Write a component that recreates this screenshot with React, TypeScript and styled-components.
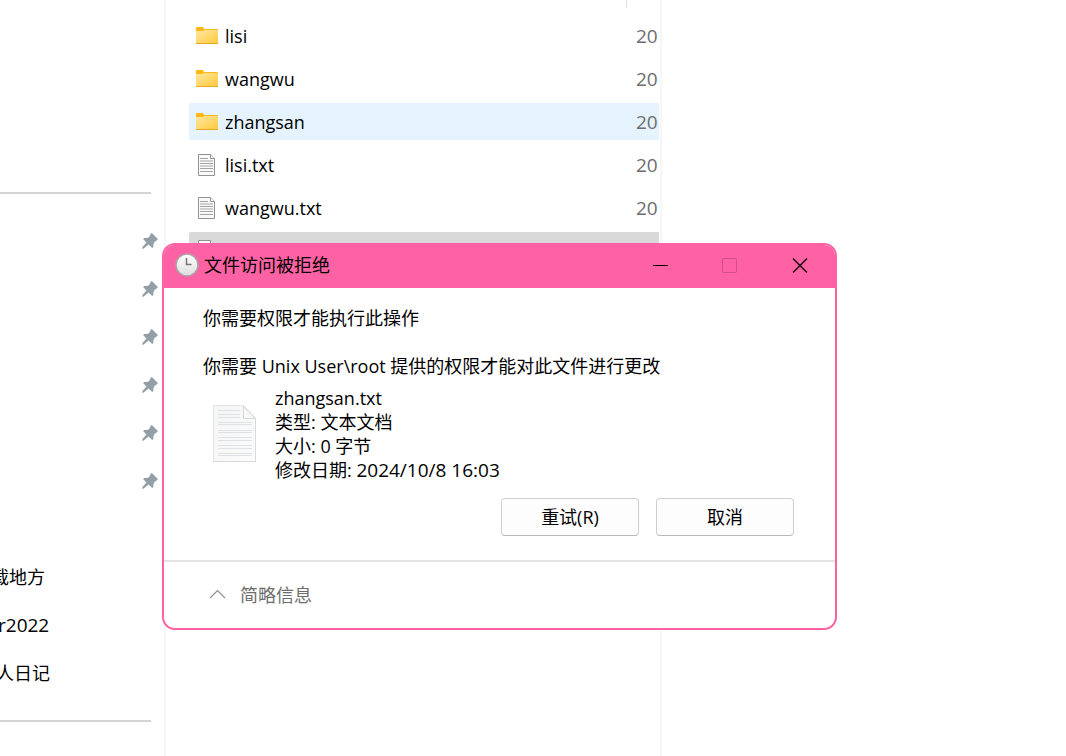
import React from "react";
import styled, { createGlobalStyle } from "styled-components";

const GlobalStyle = createGlobalStyle`
  *, *::before, *::after { box-sizing: border-box; }
  body {
    margin: 0;
    background: #fff;
    color: #000;
    font: 18px/24px "Open Sans", "Noto Sans CJK SC", sans-serif;
    overflow: hidden;
  }
  button { font: inherit; color: inherit; }
  svg { display: block; flex: none; }
`;

const Desktop = styled.div`
  position: relative;
  display: flex;
  min-height: 100vh;
`;

const Sidebar = styled.nav`
  flex: none;
  width: 166px;
  padding-top: 192px;
  border-right: 2px solid #f6f6f6;
`;

const SidebarRule = styled.hr`
  height: 2px;
  margin: 0 13px 0 0;
  border: 0;
  background: #d5d5d5;
`;

const SidebarList = styled.ul`
  margin: 0;
  padding: 23px 0;
  list-style: none;
`;

const SidebarItem = styled.li<{ $cut?: number }>`
  display: flex;
  align-items: center;
  height: 48px;
  padding-right: 6px;
  margin-left: ${(p) => -(p.$cut ?? 0)}px;
  white-space: nowrap;

  svg { margin-left: auto; }
`;

const SidebarLink = styled.a`
  color: inherit;
  text-decoration: none;
`;

const Large = styled.span`
  font-size: 19px;
`;

const FilePane = styled.main`
  flex: none;
  width: 496px;
  padding-left: 23px;
  border-right: 2px solid #f6f6f6;
`;

const ColumnHeader = styled.div`
  height: 8px;
  width: 438px;
  margin-bottom: 9px;
  border-right: 1px solid #e0e0e0;
`;

const FileList = styled.ul`
  display: flex;
  flex-direction: column;
  gap: 6px;
  margin: 0;
  padding: 0 1px 0 0;
  list-style: none;
`;

const FileRow = styled.li<{ $state?: "hover" | "selected" }>`
  display: flex;
  align-items: center;
  gap: 6px;
  height: 37px;
  padding-left: 6px;
  border-radius: 2px 0 0 2px;
  background: ${(p) =>
    p.$state === "hover" ? "#e5f3ff" : p.$state === "selected" ? "#d9d9d9" : "transparent"};
`;

const FileDate = styled.span`
  width: 23px;
  margin-left: auto;
  overflow: hidden;
  font-size: 19px;
  color: #6d6d6d;
`;

const Dialog = styled.section`
  position: absolute;
  left: 162px;
  top: 243px;
  width: 675px;
  overflow: hidden;
  border: 2px solid #ff62a4;
  border-radius: 13px;
  background: #fff;
`;

const TitleBar = styled.header`
  display: flex;
  align-items: center;
  height: 43px;
  padding-left: 11px;
  padding-bottom: 3px;
  background: #ff62a4;
`;

const Title = styled.h1`
  flex: 1;
  margin: 0 0 0 5px;
  font-size: 18px;
  font-weight: 400;
`;

const CaptionButton = styled.button`
  display: grid;
  place-items: center;
  width: 70px;
  height: 40px;
  padding: 0;
  border: 0;
  background: transparent;
`;

const Body = styled.div`
  padding: 18px 41px 24px 39px;
  border-bottom: 2px solid #e3e3e3;
`;

const Message = styled.p`
  margin: 0 0 24px;
  white-space: nowrap;
`;

const FileSummary = styled.div`
  display: flex;
  align-items: center;
  gap: 18px;
  margin-top: -16px;
  padding-left: 9px;
`;

const Details = styled.ul`
  margin: 0;
  padding: 0;
  list-style: none;
`;

const Actions = styled.div`
  display: flex;
  justify-content: flex-end;
  gap: 17px;
  margin-top: 16px;
`;

const ActionButton = styled.button`
  width: 138px;
  height: 38px;
  padding: 0;
  border: 1px solid #d0d0d0;
  border-bottom-color: #b8b8b8;
  border-radius: 4px;
  background: #fdfdfd;
`;

const Footer = styled.footer`
  padding: 21px 44px;
`;

const DetailsToggle = styled.button`
  display: flex;
  align-items: center;
  gap: 13px;
  padding: 0;
  border: 0;
  background: transparent;
  color: #6d6d6d;
`;

const FolderIcon = () => (
  <svg width="24" height="19" viewBox="0 0 24 19" aria-hidden="true">
    <defs>
      <linearGradient id="folder" x1="0" y1="0" x2="1" y2="1">
        <stop offset="0" stopColor="#ffe7a0" />
        <stop offset="1" stopColor="#ffca3e" />
      </linearGradient>
    </defs>
    <path d="M1 2q0-1 1-1h6l1 2h13q1 0 1 1v3H1z" fill="#fbb817" />
    <path d="M1 5h7l1-1h14v12q0 1-1 1H2q-1 0-1-1z" fill="url(#folder)" />
    <path d="M1 17.500h22" stroke="#eba51e" />
  </svg>
);

const TextIcon = () => (
  <svg width="24" height="23" viewBox="0 0 24 23" aria-hidden="true">
    <path d="M3.500 1.500h12l4 4v17h-16z" fill="#fafafa" stroke="#929292" />
    <path d="M15.500 1.500v4h4" fill="#fff" stroke="#929292" />
    <path
      d="M5 5.500h8M5 8h13M5 10.500h13M5 13h13M5 15.500h13M5 18.500h13"
      stroke="#a3a3a3"
      strokeWidth="1.200"
    />
  </svg>
);

const PinIcon = () => (
  <svg width="16" height="16" viewBox="0 0 16 16" aria-hidden="true">
    <path
      d="M8.800.6q.9-.7 1.800.1l4.800 4.900q.7.900-.2 1.700l-2.600 1.400-1.200 2.500-.1 2.800q-.5 1.300-1.600.5L6.600 11.600 1.500 15.800.2 15.600l0-1.300 4.300-4.800L1.700 6.800q-.8-1.100.4-1.700l3.300-.2 2.200-1.400z"
      fill="#939fa7"
    />
  </svg>
);

const ClockIcon = () => (
  <svg width="24" height="24" viewBox="0 0 24 24" aria-hidden="true">
    <defs>
      <linearGradient id="clock" x1="0" y1="0" x2="0" y2="1">
        <stop offset="0" stopColor="#fff" />
        <stop offset="1" stopColor="#dedede" />
      </linearGradient>
    </defs>
    <circle cx="12" cy="12" r="11" fill="url(#clock)" stroke="#a9a0a5" strokeWidth="1.500" />
    <path d="M11.500 5v6.500h5" fill="none" stroke="#777" strokeWidth="1.500" />
  </svg>
);

const DocumentIcon = () => (
  <svg width="45" height="58" viewBox="0 0 45 58" aria-hidden="true">
    <defs>
      <linearGradient id="page" x1="0" y1="0" x2="1" y2="1">
        <stop offset="0" stopColor="#f3f4f5" />
        <stop offset="1" stopColor="#fcfcfc" />
      </linearGradient>
      <linearGradient id="fold" x1="0" y1="1" x2="1" y2="0">
        <stop offset="0.300" stopColor="#fafafa" />
        <stop offset="1" stopColor="#d3d5d7" />
      </linearGradient>
    </defs>
    <path d="M1.500.5h30l12 13v43h-42z" fill="url(#page)" stroke="#e2e4e5" />
    <path d="M1 56.500h43M43.500 13v44" stroke="#d8dadb" />
    <path d="M31.500.5v13h12z" fill="url(#fold)" stroke="#d6d8da" />
    <path
      d="M6 5.500h22M6 9.500h22M6 12.500h22M6 17.500h34M6 19.500h34M6 25.500h34M6 27.500h34M6 32.500h34M6 35.500h34M6 40.500h34M6 43.500h34M6 48.500h34M6 50.500h34"
      stroke="#dfe1e4"
    />
  </svg>
);

const MinimizeIcon = () => (
  <svg width="16" height="16" viewBox="0 0 16 16" aria-hidden="true">
    <path d="M1 8.500h15" stroke="#000" />
  </svg>
);

const MaximizeIcon = () => (
  <svg width="16" height="16" viewBox="0 0 16 16" aria-hidden="true">
    <rect x="0.500" y="1.500" width="14" height="14" rx="1" fill="none" stroke="#cf5088" />
  </svg>
);

const CloseIcon = () => (
  <svg width="16" height="16" viewBox="0 0 16 16" aria-hidden="true">
    <path d="M1 1.500l14 14M15 1.500l-14 14" stroke="#1a0a11" strokeWidth="1.500" />
  </svg>
);

const ChevronIcon = () => (
  <svg width="19" height="12" viewBox="0 0 19 12" aria-hidden="true">
    <path d="M2 9l7.500-7.500L17 9" fill="none" stroke="#8f8f8f" strokeWidth="1.200" />
  </svg>
);

const files: { name: string; folder?: boolean; hovered?: boolean }[] = [
  { name: "lisi", folder: true },
  { name: "wangwu", folder: true },
  { name: "zhangsan", folder: true, hovered: true },
  { name: "lisi.txt" },
  { name: "wangwu.txt" },
];

export default function App() {
  return (
    <>
      <GlobalStyle />
      <Desktop>
        <Sidebar>
          <SidebarRule />
          <SidebarList>
            {[0, 1, 2, 3, 4, 5].map((i) => (
              <SidebarItem key={i}>
                <PinIcon />
              </SidebarItem>
            ))}
            <SidebarItem />
            <SidebarItem $cut={9}>
              <SidebarLink href="#downloads">载地方</SidebarLink>
            </SidebarItem>
            <SidebarItem $cut={2}>
              <SidebarLink href="#2022">
                <Large>r2022</Large>
              </SidebarLink>
            </SidebarItem>
            <SidebarItem $cut={4}>
              <SidebarLink href="#diary">人日记</SidebarLink>
            </SidebarItem>
          </SidebarList>
          <SidebarRule />
        </Sidebar>
        <FilePane>
          <ColumnHeader />
          <FileList>
            {files.map((file) => (
              <FileRow key={file.name} $state={file.hovered ? "hover" : undefined}>
                {file.folder ? <FolderIcon /> : <TextIcon />}
                <span>{file.name}</span>
                <FileDate>20</FileDate>
              </FileRow>
            ))}
            <FileRow $state="selected">
              <TextIcon />
            </FileRow>
          </FileList>
        </FilePane>
        <Dialog role="dialog" aria-labelledby="dialog-title">
          <TitleBar>
            <ClockIcon />
            <Title id="dialog-title">文件访问被拒绝</Title>
            <CaptionButton aria-label="最小化">
              <MinimizeIcon />
            </CaptionButton>
            <CaptionButton aria-label="最大化" disabled>
              <MaximizeIcon />
            </CaptionButton>
            <CaptionButton aria-label="关闭">
              <CloseIcon />
            </CaptionButton>
          </TitleBar>
          <Body>
            <Message>你需要权限才能执行此操作</Message>
            <Message>你需要 Unix User\root 提供的权限才能对此文件进行更改</Message>
            <FileSummary>
              <DocumentIcon />
              <Details>
                <li>zhangsan.txt</li>
                <li>类型: 文本文档</li>
                <li>大小: 0 字节</li>
                <li>
                  修改日期: <Large>2024/10/8 16:03</Large>
                </li>
              </Details>
            </FileSummary>
            <Actions>
              <ActionButton>重试(R)</ActionButton>
              <ActionButton>取消</ActionButton>
            </Actions>
          </Body>
          <Footer>
            <DetailsToggle aria-expanded="true">
              <ChevronIcon />
              简略信息
            </DetailsToggle>
          </Footer>
        </Dialog>
      </Desktop>
    </>
  );
}
